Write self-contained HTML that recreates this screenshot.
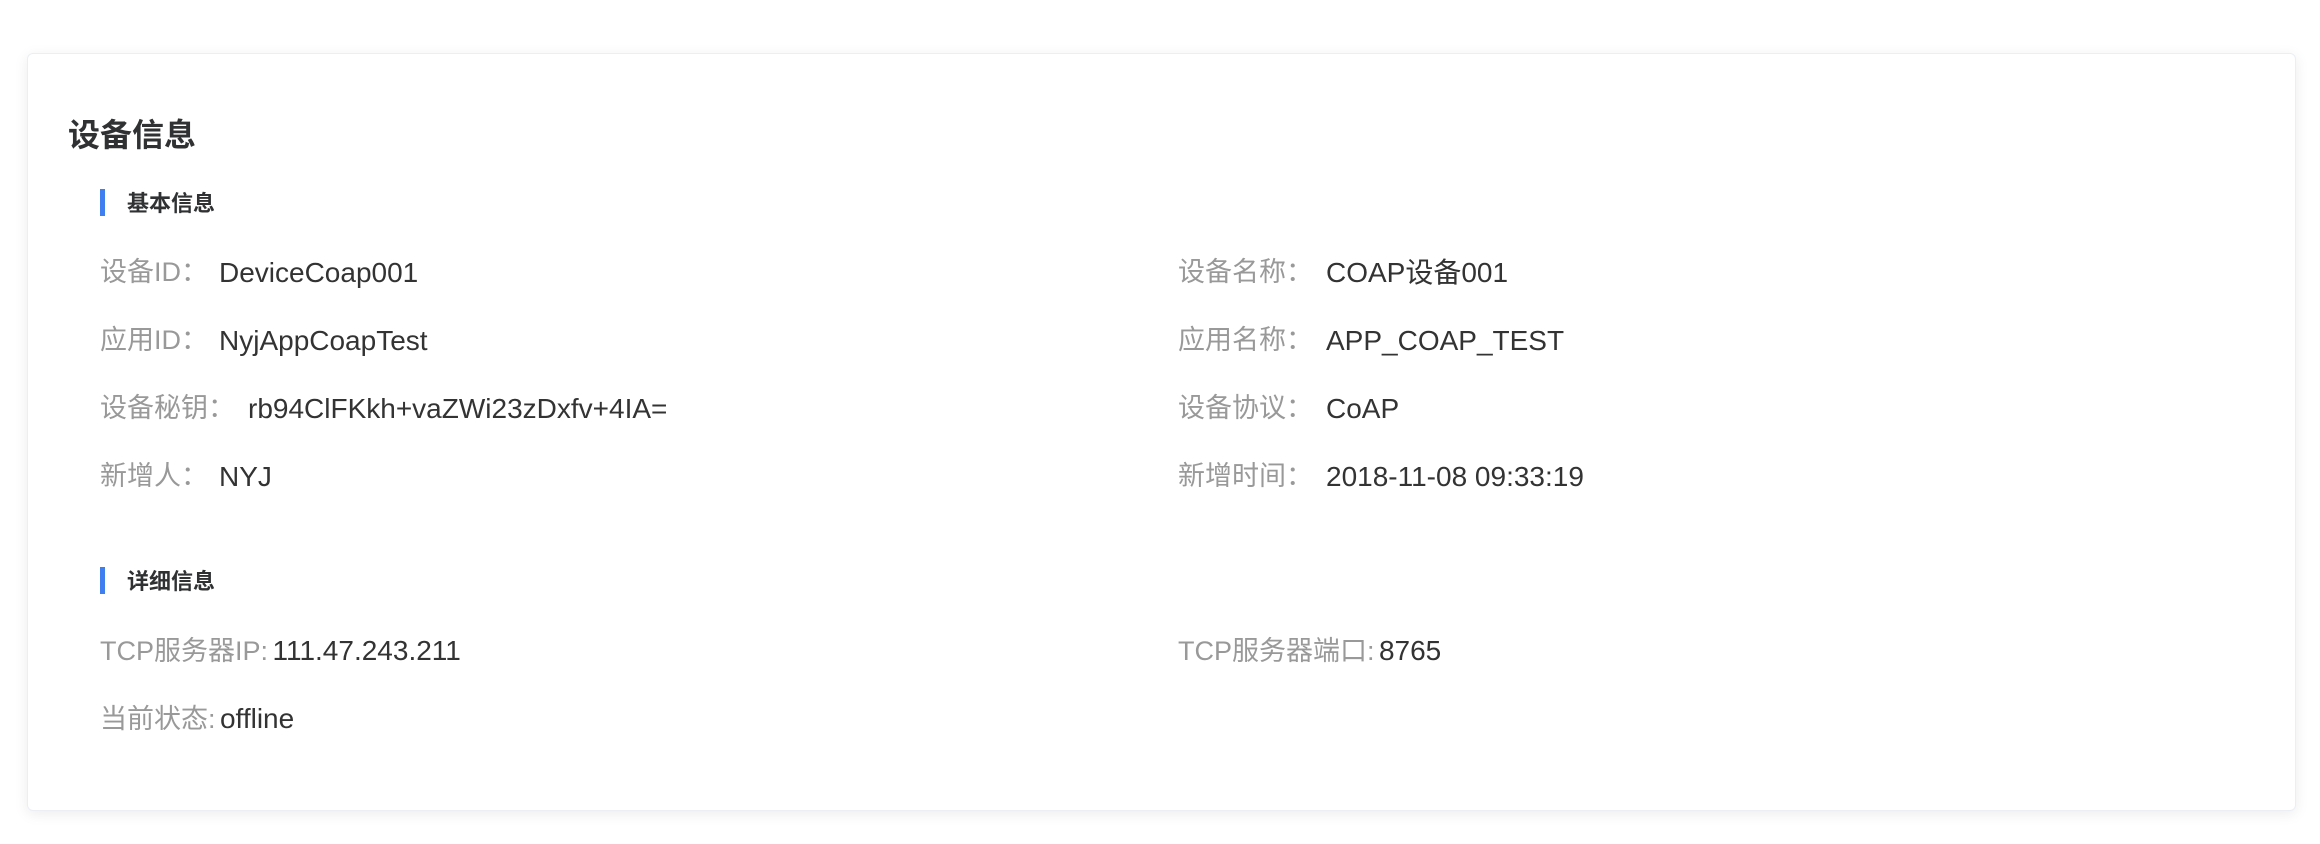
<!DOCTYPE html>
<html><head><meta charset="utf-8"><style>
html,body{margin:0;padding:0;background:#fff;width:2320px;height:844px;overflow:hidden;}
body{font-family:"Liberation Sans","Noto Sans CJK SC",sans-serif;position:relative;}
.card{position:absolute;left:27px;top:53px;width:2269px;height:758px;border:1px solid #ebeef5;border-radius:6px;background:#fff;box-shadow:0 3px 14px rgba(0,0,0,0.08);box-sizing:border-box;}
.t{position:absolute;white-space:nowrap;line-height:1;}
.title{left:68px;top:119px;font-size:32px;font-weight:bold;color:#303133;}
.bar{position:absolute;left:100px;width:5px;background:#3f7ef0;}
.sub{left:127px;font-size:22px;font-weight:bold;color:#303133;}
.l{font-size:27px;color:#999;}
.v{font-size:28px;color:#333;}
</style></head><body>
<div class="card"></div>
<div class="t title">设备信息</div>
<div class="bar" style="top:189px;height:27px"></div>
<div class="t sub" style="top:193px">基本信息</div>

<div class="t l" style="left:100px;top:259px">设备ID：</div><div class="t v" style="left:219px;top:259px">DeviceCoap001</div>
<div class="t l" style="left:1178px;top:259px">设备名称：</div><div class="t v" style="left:1326px;top:259px">COAP设备001</div>

<div class="t l" style="left:100px;top:327px">应用ID：</div><div class="t v" style="left:219px;top:327px">NyjAppCoapTest</div>
<div class="t l" style="left:1178px;top:327px">应用名称：</div><div class="t v" style="left:1326px;top:327px">APP_COAP_TEST</div>

<div class="t l" style="left:100px;top:395px">设备秘钥：</div><div class="t v" style="left:248px;top:395px">rb94ClFKkh+vaZWi23zDxfv+4IA=</div>
<div class="t l" style="left:1178px;top:395px">设备协议：</div><div class="t v" style="left:1326px;top:395px">CoAP</div>

<div class="t l" style="left:100px;top:463px">新增人：</div><div class="t v" style="left:219px;top:463px">NYJ</div>
<div class="t l" style="left:1178px;top:463px">新增时间：</div><div class="t v" style="left:1326px;top:463px">2018-11-08 09:33:19</div>

<div class="bar" style="top:567px;height:27px"></div>
<div class="t sub" style="top:571px">详细信息</div>

<div class="t" style="left:100px;top:637px"><span class="l">TCP服务器IP:</span>&nbsp;<span class="v">111.47.243.211</span></div>
<div class="t" style="left:1178px;top:637px"><span class="l">TCP服务器端口:</span>&nbsp;<span class="v">8765</span></div>
<div class="t" style="left:100px;top:705px"><span class="l">当前状态:</span>&nbsp;<span class="v">offline</span></div>
</body></html>
